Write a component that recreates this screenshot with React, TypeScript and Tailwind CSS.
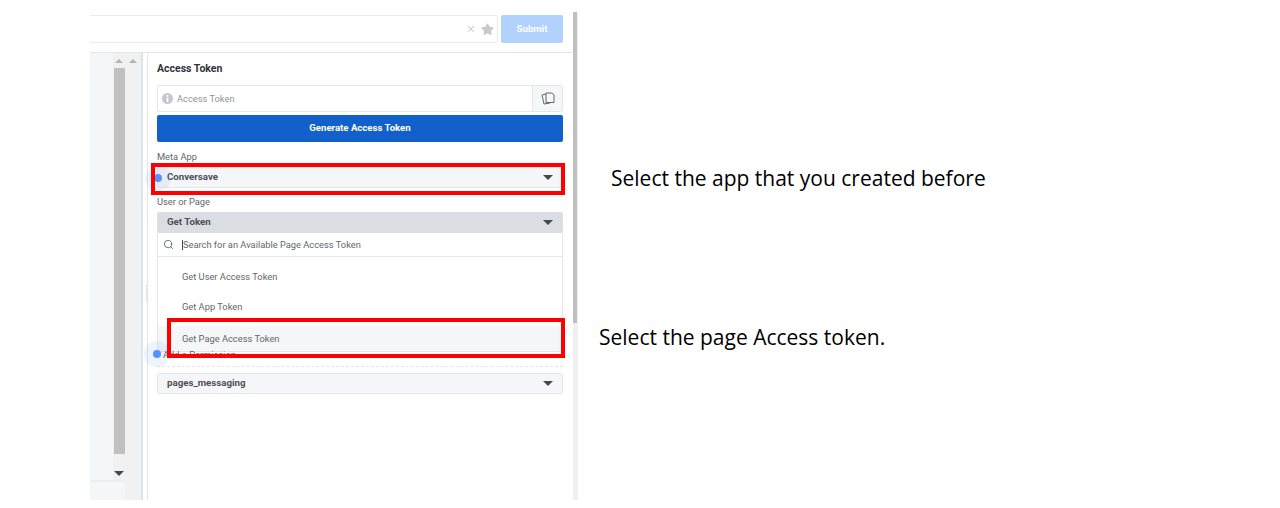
import { Search, Star, X } from 'lucide-react';

const Caret = () => (
  <span className="block w-0 h-0 border-x-[5px] border-x-transparent border-t-[5px] border-t-[#444950]" />
);

const ArrowUp = () => (
  <span className="block w-0 h-0 border-x-[4px] border-x-transparent border-b-[4px] border-b-[#b4b4b4]" />
);

function Select({ label, dark }: { label: string; dark?: boolean }) {
  return (
    <div className={`h-[21px] flex items-center justify-between pl-[9px] pr-[9px] rounded-[2px] border ${dark ? 'bg-[#dadde1] border-[#dadde1]' : 'bg-[#f5f6f7] border-[#e4e6eb]'}`}>
      <span className="text-[9.7px] font-bold text-[#4b4f56]">{label}</span>
      <Caret />
    </div>
  );
}

export default function App() {
  return (
    <div className="w-[1280px] h-[508px] bg-white relative overflow-hidden flex font-['Roboto',sans-serif]">
      <div className="w-[90px] shrink-0" />

      <div className="w-[488px] h-[488px] mt-3 flex shrink-0">
        <div className="w-[483px] flex flex-col">
          {/* query bar */}
          <div className="h-[41px] shrink-0 flex gap-[3px] pt-[3px] pr-[10px] border-b border-[#e4e6eb]">
            <div className="flex-1 h-[28px] border-y border-r border-[#e9ebee] rounded-r-[2px] flex items-center justify-end gap-[5px] pr-[3px]">
              <X size={10} strokeWidth={2.5} className="text-[#c4c6ca]" />
              <Star size={13} className="text-[#c8cacd] fill-[#c8cacd]" />
            </div>
            <button className="w-[62px] h-[28px] bg-[#b0d2fd] rounded-[2px] text-white text-[9.6px] font-bold">Submit</button>
          </div>

          <div className="flex-1 flex min-h-0">
            {/* left explorer */}
            <div className="w-[35px] flex flex-col">
              <div className="flex-1 flex min-h-0">
                <div className="w-[23px] bg-[#f5f6f7]" />
                <div className="w-[12px] bg-[#f1f1f1] flex flex-col items-center pt-[6px]">
                  <ArrowUp />
                  <div className="w-[11px] h-[386px] bg-[#c0c0c0] mt-[5px]" />
                  <div className="mt-[17px]"><Caret /></div>
                </div>
              </div>
              <div className="h-[20px] bg-[#f5f6f7] border-t-2 border-[#eeeeee]" />
            </div>
            <div className="w-[16px] bg-[#f1f1f1] flex justify-center pt-[6px]">
              <ArrowUp />
            </div>
            <div className="w-[6px] bg-white border-l-2 border-[#dfe3ea] relative">
              <div className="absolute top-[232px] left-[-1px] w-[5px] h-[16px] border-x border-dotted border-[#d4d6da]" />
            </div>
            <div className="w-[1px] bg-[#e4e6eb]" />

            {/* access token panel */}
            <div className="flex-1 pl-[9px] pr-[10px] pt-[9px]">
              <h2 className="text-[10.5px] leading-[13px] font-bold text-[#303338]">Access Token</h2>
              <div className="h-[27px] mt-[10px] flex border border-[#e4e6eb] rounded-[2px]">
                <div className="flex-1 flex items-center gap-[4px] pl-[4px]">
                  <svg width="11" height="11" viewBox="0 0 11 11">
                    <circle cx="5.5" cy="5.5" r="5.5" fill="#c4c7cc" />
                    <rect x="4.6" y="2" width="1.8" height="1.8" fill="#fff" />
                    <rect x="4.6" y="4.6" width="1.8" height="4.4" fill="#fff" />
                  </svg>
                  <span className="text-[9.3px] text-[#90949c]">Access Token</span>
                </div>
                <div className="w-[30px] bg-[#f5f6f7] border-l border-[#e4e6eb] flex items-center justify-center">
                  <svg width="14" height="13" viewBox="0 0 14 13" fill="none" stroke="#606770" strokeWidth="1">
                    <path d="M5 2 L1 3 L3 12 L9 11" />
                    <path d="M5 1 H11 L13 3 V10.5 H5 Z" fill="#f5f6f7" />
                  </svg>
                </div>
              </div>
              <button className="w-full h-[27px] mt-[3px] bg-[#1160cb] rounded-[2px] text-white text-[9.6px] font-bold">Generate Access Token</button>
              <div className="text-[9.3px] leading-[11px] text-[#606770] mt-[9px] mb-[5px]">Meta App</div>
              <Select label="Conversave" />
              <div className="text-[9.3px] leading-[11px] text-[#606770] mt-[8px] mb-[5px]">User or Page</div>
              <Select label="Get Token" dark />
              <div className="border-x border-b border-[#e4e6eb] rounded-b-[2px] h-[119px] flex flex-col">
                <div className="h-[24px] flex items-center border-b border-[#e4e6eb] pl-[5px] shrink-0">
                  <Search size={11} className="text-[#606770] mr-[8px]" />
                  <span className="w-px h-[10px] bg-[#444950]" />
                  <span className="text-[9.3px] text-[#606770]">Search for an Available Page Access Token</span>
                </div>
                <div className="h-[39px] flex items-center pl-[24px] text-[9.3px] text-[#606770]">Get User Access Token</div>
                <div className="h-[22px] flex items-center pl-[24px] text-[9.3px] text-[#606770]">Get App Token</div>
                <div className="flex-1 mt-[8px] bg-[#f5f6f7] flex items-center pl-[24px] text-[9.3px] text-[#606770]">Get Page Access Token</div>
              </div>
              <div className="text-[9.3px] leading-[11px] text-[#606770] -mt-[3px] pl-[6px] pb-[6px] border-b border-dashed border-[#e4e6eb]">Add a Permission</div>
              <div className="mt-[6px]"><Select label="pages_messaging" /></div>
            </div>
          </div>
        </div>

        {/* page scrollbar */}
        <div className="w-[5px] bg-[#f0f0f0]">
          <div className="w-[4px] h-[311px] bg-[#c0c0c0]" />
        </div>
      </div>

      {/* hint dots */}
      <div className="absolute left-[145px] top-[165px] w-[26px] h-[26px] rounded-full bg-[#5890ff]/10 flex items-center justify-center">
        <div className="w-[8px] h-[8px] rounded-full bg-[#5890ff]" />
      </div>
      <div className="absolute left-[144px] top-[341px] w-[26px] h-[26px] rounded-full bg-[#5890ff]/10 flex items-center justify-center">
        <div className="w-[8px] h-[8px] rounded-full bg-[#5890ff]" />
      </div>

      {/* red annotation boxes */}
      <div className="absolute left-[151px] top-[163px] w-[414px] h-[32px] border-4 border-[#ff0000]" />
      <div className="absolute left-[167px] top-[318px] w-[398px] h-[40px] border-4 border-[#ff0000]" />

      {/* annotation text */}
      <div className="absolute left-[611px] top-[165px] text-[21px] leading-[27px] text-black font-['Open_Sans',sans-serif]">Select the app that you created before</div>
      <div className="absolute left-[599px] top-[324px] text-[21px] leading-[27px] text-black font-['Open_Sans',sans-serif]">Select the page Access token.</div>
    </div>
  );
}
